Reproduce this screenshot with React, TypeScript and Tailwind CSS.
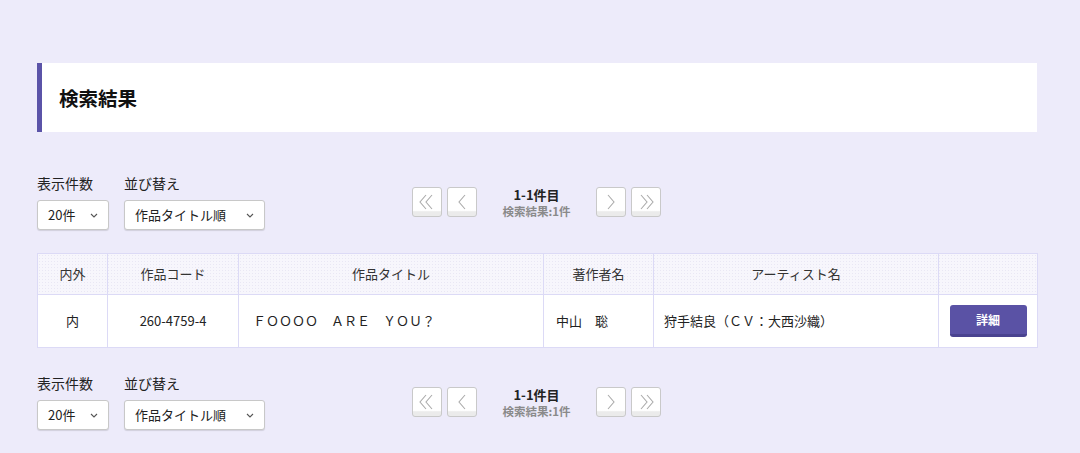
import React from "react";

const font = { fontFamily: '"Noto Sans CJK JP", "Noto Sans", sans-serif' };

function Chevron() {
  return (
    <svg width="8" height="5" viewBox="0 0 8 5" className="text-[#555]">
      <path d="M1 1 L4 4 L7 1" fill="none" stroke="currentColor" strokeWidth="1.1" />
    </svg>
  );
}

function Select({ label, value, w }: { label: string; value: string; w: string }) {
  return (
    <div className="flex flex-col">
      <div className="text-[14px] leading-[20px] text-[#222] mb-[7px]">{label}</div>
      <div
        className={`${w} h-[30px] bg-white border border-[#c8c8c8] rounded-[3px] shadow-[0_1px_1px_rgba(0,0,0,0.12)] flex items-center justify-between pl-[10px] pr-[10px] text-[13px] text-[#222]`}
      >
        <span>{value}</span>
        <Chevron />
      </div>
    </div>
  );
}

function PageBtn({ d }: { d: string }) {
  return (
    <div className="w-[30px] h-[30px] rounded-[3px] border border-[#c9c9c9] bg-[linear-gradient(to_bottom,#ffffff_0%,#ffffff_80%,#ebebeb_85%,#ebebeb_100%)] flex items-center justify-center">
      <svg width="20" height="20" viewBox="0 0 20 20">
        <path d={d} fill="none" stroke="#ababab" strokeWidth="1.1" strokeLinejoin="miter" />
      </svg>
    </div>
  );
}

function Controls() {
  return (
    <div className="flex items-center">
      <div className="flex gap-[15px]">
        <Select label="表示件数" value="20件" w="w-[72px]" />
        <Select label="並び替え" value="作品タイトル順" w="w-[141px]" />
      </div>
      <div className="flex items-center ml-[147px] mt-[1px]">
        <div className="flex gap-[5px]">
          <PageBtn d="M9 3 L3 10 L9 17 M15 3 L9 10 L15 17" />
          <PageBtn d="M13 3 L7 10 L13 17" />
        </div>
        <div className="w-[119px] flex flex-col items-center">
          <div className="text-[13px] leading-[16px] font-bold text-[#222]">1-1件目</div>
          <div className="text-[11.5px] leading-[14px] font-bold text-[#8a8a8a] mt-[1px]">検索結果:1件</div>
        </div>
        <div className="flex gap-[5px]">
          <PageBtn d="M7 3 L13 10 L7 17" />
          <PageBtn d="M5 3 L11 10 L5 17 M11 3 L17 10 L11 17" />
        </div>
      </div>
    </div>
  );
}

export default function App() {
  const th =
    "border border-[#dcdaf6] font-normal text-[13px] text-[#333] h-[41px] text-center";
  const td = "border border-[#dcdaf6] text-[13px] text-[#222] h-[53px]";
  return (
    <div className="min-h-[453px] w-full bg-[#edebfa] pl-[37px] pr-[43px] pt-[63px] pb-[23px]" style={font}>
      <div className="h-[69px] bg-white border-l-[5px] border-[#5b53a8] flex items-center pl-[17px]">
        <h1 className="text-[19.5px] font-bold text-[#111]">検索結果</h1>
      </div>

      <div className="mt-[41px]">
        <Controls />
      </div>

      <table className="mt-[23px] w-[1000px] table-fixed border-collapse bg-white">
        <colgroup>
          <col className="w-[70px]" />
          <col className="w-[131px]" />
          <col className="w-[305px]" />
          <col className="w-[110px]" />
          <col className="w-[285px]" />
          <col className="w-[99px]" />
        </colgroup>
        <thead>
          <tr className="bg-[#f7f6fc] bg-[radial-gradient(#e9e7f4_0.6px,transparent_0.8px)] bg-[length:3px_3px]">
            <th className={th}>内外</th>
            <th className={th}>作品コード</th>
            <th className={th}>作品タイトル</th>
            <th className={th}>著作者名</th>
            <th className={th}>アーティスト名</th>
            <th className={th}></th>
          </tr>
        </thead>
        <tbody>
          <tr>
            <td className={`${td} text-center`}>内</td>
            <td className={`${td} text-center`}>260-4759-4</td>
            <td className={`${td} pl-[14px] text-[12.5px]`}>ＦＯＯＯＯ　ＡＲＥ　ＹＯＵ？</td>
            <td className={`${td} pl-[12px]`}>中山　聡</td>
            <td className={`${td} pl-[10px]`}>狩手結良（ＣＶ：大西沙織）</td>
            <td className={`${td} text-center`}>
              <button className="w-[77px] h-[32px] rounded-[3px] bg-[#5a52a5] border-b-[3px] border-[#4a4390] text-white text-[12px] font-bold">
                詳細
              </button>
            </td>
          </tr>
        </tbody>
      </table>

      <div className="mt-[25px]">
        <Controls />
      </div>
    </div>
  );
}
